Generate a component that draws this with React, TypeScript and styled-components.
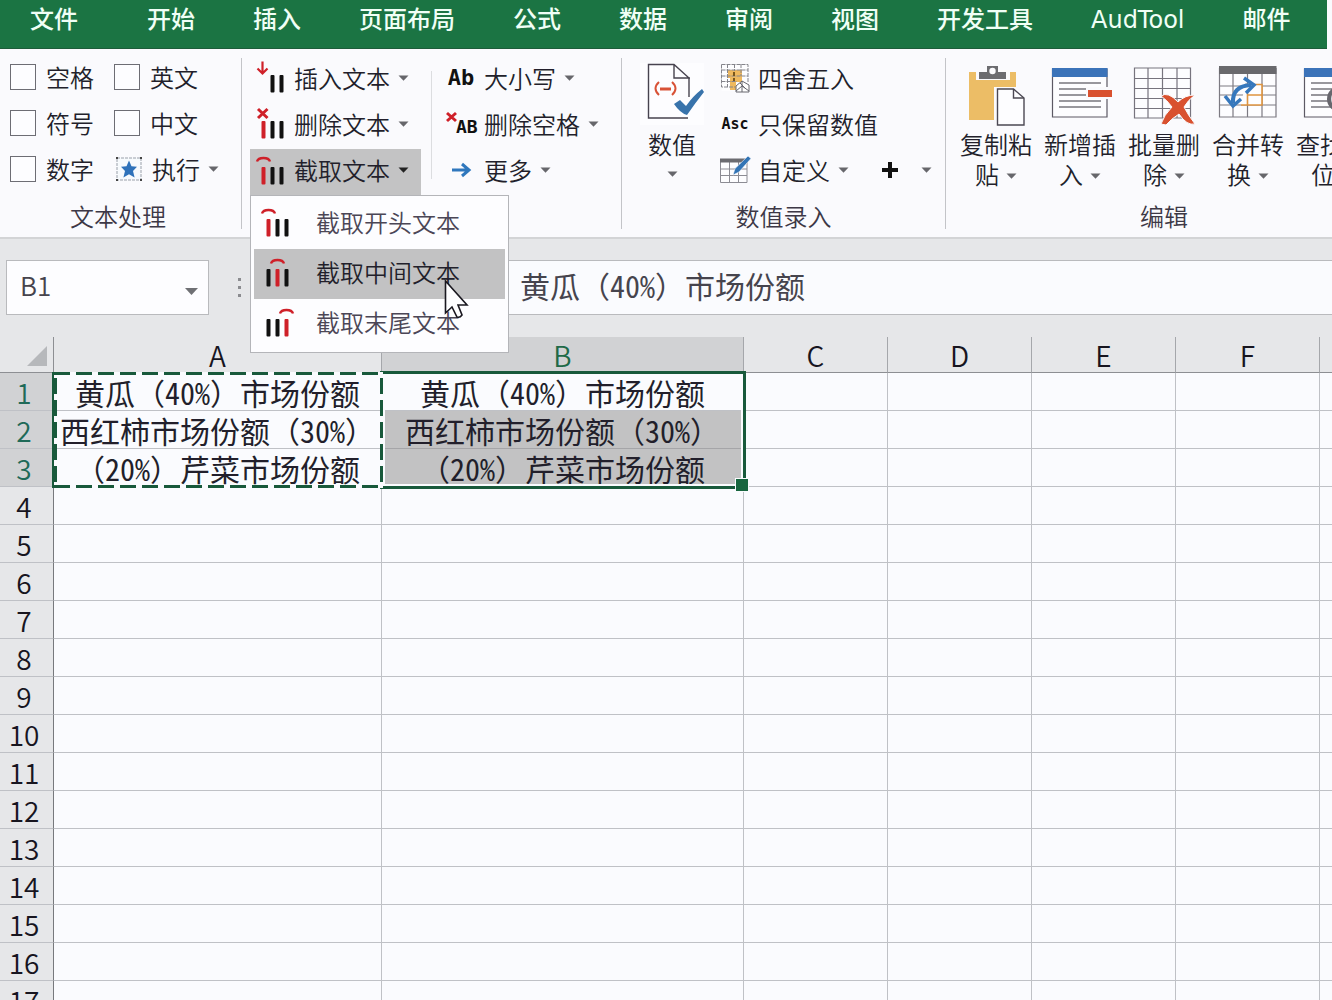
import React from 'react';
import styled, { createGlobalStyle } from 'styled-components';

const GREEN = '#1b7443';
const LINE = '#bfc1c6';
const FONT = '"Noto Sans CJK SC", "Noto Sans", sans-serif';
const GRID_FONT = '"Noto Sans Mono CJK SC", "Noto Sans CJK SC", sans-serif';

const GlobalStyle = createGlobalStyle`
  * { box-sizing: border-box; }
  body { margin: 0; background: #fafbfe; }
  button, input { font: inherit; color: inherit; }
`;

const Window = styled.div`
  height: 100vh;
  overflow: hidden;
  background: #fafbfe;
  color: #221f2b;
  font-family: ${FONT};
  font-size: 24px;
  font-weight: 350;
  line-height: 30px;
`;

/* ---------- tabs ---------- */
const TabBar = styled.nav`
  display: flex;
  height: 49px;
  margin-right: 5px;
  padding: 0 1px 8px;
  overflow: hidden;
  background: ${GREEN};
  border-bottom: 1px solid #1d5c3a;
`;

const Tab = styled.button<{ $first?: boolean }>`
  flex: none;
  padding: 0 ${p => (p.$first ? 40 : 29)}px 0 29px;
  border: 0;
  background: none;
  color: #f0fff6;
  font-family: "DejaVu Sans", ${FONT};
  font-weight: 500;
  white-space: nowrap;
`;

/* ---------- ribbon ---------- */
const Ribbon = styled.div`
  display: flex;
  height: 190px;
  background: #fafafd;
  border-bottom: 2px solid #d3d4d6;
`;

const Group = styled.section<{ $pad?: string }>`
  flex: none;
  display: flex;
  flex-direction: column;
  padding: ${p => p.$pad || '8px 8px 0'};
`;

const GroupBody = styled.div<{ $left?: number }>`
  display: flex;
  height: 138px;
  padding-left: ${p => p.$left || 0}px;
`;

const Caption = styled.div`
  padding-top: 6px;
  color: #3d3846;
  text-align: center;
`;

const Divider = styled.div<{ $inner?: boolean }>`
  flex: none;
  width: 1px;
  margin: ${p => (p.$inner ? '14px 8px 16px 10px' : '9px 0 8px')};
  background: ${p => (p.$inner ? '#dcdde0' : '#c3c4c8')};
`;

const CheckGrid = styled.div`
  display: grid;
  grid-template-columns: 104px 112px;
  grid-auto-rows: 46px;
  height: 141px;
`;

const CheckLabel = styled.label`
  display: flex;
  align-items: center;
  gap: 10px;
`;

const Check = styled.input`
  appearance: none;
  width: 26px;
  height: 26px;
  margin: 0;
  border: 1px solid #6d6d74;
  background: #fdfdff;
`;

const Column = styled.div`
  display: flex;
  flex-direction: column;
  align-items: flex-start;
`;

const Row = styled.div`
  display: flex;
  gap: 8px;
`;

const Tool = styled.button<{ $active?: boolean; $flush?: boolean }>`
  display: flex;
  align-items: center;
  gap: 9px;
  height: 46px;
  padding: ${p => (p.$flush ? '0 0 0 1px' : '0 12px 4px 7px')};
  border: 0;
  background: ${p => (p.$active ? '#c3c3c4' : 'none')};
  white-space: nowrap;
`;

const IconBox = styled.span`
  flex: none;
  display: flex;
  align-items: center;
  justify-content: center;
  width: 28px;
  height: 32px;
  svg { flex: none; overflow: visible; }
`;

const Glyphs = styled.span<{ $size: number }>`
  font-family: "DejaVu Sans Mono", monospace;
  font-size: ${p => p.$size}px;
  font-weight: 700;
  color: #111;
`;

const BigTool = styled.button`
  flex: none;
  align-self: flex-start;
  width: 84px;
  padding: 6px 5px 0;
  border: 0;
  background: none;
  text-align: center;
  svg { overflow: visible; }
`;

const BigIcon = styled.span`
  display: flex;
  justify-content: center;
  height: 66px;
`;

const CaretSvg = styled.svg<{ $block?: boolean; $inText?: boolean }>`
  flex: none;
  display: ${p => (p.$block ? 'block' : 'inline-block')};
  margin: ${p => (p.$block ? '12px auto 0' : p.$inText ? '0 0 5px 7px' : '0 0 0 -1px')};
`;

const MenuAnchor = styled.div`
  position: relative;
`;

const Menu = styled.div`
  position: absolute;
  z-index: 5;
  top: 100%;
  left: 0;
  width: 259px;
  padding: 3px;
  border: 1px solid #b4b5b9;
  background: #fdfdff;
`;

const MenuItem = styled.button<{ $hover?: boolean }>`
  display: flex;
  align-items: center;
  gap: 26px;
  width: 100%;
  height: 50px;
  padding: 0 8px 4px;
  border: 0;
  background: ${p => (p.$hover ? '#c2c2c3' : 'none')};
  color: ${p => (p.$hover ? '#221f2b' : '#4b4656')};
`;

const Pointer = styled.svg`
  position: absolute;
  left: 193px;
  top: 83px;
`;

/* ---------- formula bar ---------- */
const FormulaBar = styled.div`
  display: flex;
  align-items: center;
  height: 98px;
  padding: 0 0 2px 6px;
  background: #e6e7e9;
  color: #46444d;
`;

const NameBox = styled.div`
  display: flex;
  align-items: center;
  flex: none;
  width: 203px;
  height: 55px;
  border: 1px solid #b9babd;
  background: #fdfdff;
`;

const NameInput = styled.input`
  flex: 1;
  min-width: 0;
  padding: 0 0 4px 13px;
  border: 0;
  background: none;
  font-size: 26px;
`;

const NameArrow = styled.button`
  padding: 0 10px;
  border: 0;
  background: none;
  line-height: 12px;
`;

const Dots = styled.div`
  display: grid;
  gap: 5px;
  width: 291px;
  padding-left: 29px;
  span { width: 3px; height: 3px; background: #8b8c90; }
`;

const FormulaInput = styled.input`
  flex: 1;
  min-width: 0;
  height: 55px;
  padding: 0 0 4px 19px;
  border: 1px solid #b9babd;
  border-right: 0;
  background: #fafbfe;
  font-family: ${GRID_FONT};
  font-size: 30px;
`;

/* ---------- sheet ---------- */
const Sheet = styled.table`
  width: 1464px;
  table-layout: fixed;
  border-collapse: separate;
  border-spacing: 0;
  font-size: 30px;
`;

const Corner = styled.th`
  height: 36px;
  padding: 0 6px 0 0;
  background: #e6e7e9;
  border-right: 1px solid #8d8f93;
  border-bottom: 1px solid #8d8f93;
  line-height: 20px;
  text-align: right;
`;

const ColHead = styled.th<{ $on?: boolean }>`
  height: 36px;
  padding: 0;
  background: ${p => (p.$on ? '#d1d2d4' : '#e6e7e9')};
  border-right: 1px solid #a5a7ab;
  border-bottom: 1px solid #8d8f93;
  color: ${p => (p.$on ? '#1f6a48' : '#17151f')};
  font-size: 28px;
  font-weight: 350;
`;

const RowHead = styled.th<{ $on?: boolean }>`
  height: 38px;
  padding: 0 5px 0 0;
  background: ${p => (p.$on ? '#d1d2d4' : '#e6e7e9')};
  border-right: 1px solid #77797d;
  border-bottom: 1px solid ${LINE};
  color: ${p => (p.$on ? '#1f6a58' : '#17151f')};
  font-size: 28px;
  font-weight: 350;
`;

const Cell = styled.td<{ $fill?: boolean }>`
  position: relative;
  height: 38px;
  padding: 0;
  background: ${p => (p.$fill ? '#c2c2c3' : '#fafbfe')};
  border-right: 1px solid ${LINE};
  border-bottom: 1px solid ${p => (p.$fill ? '#a5a5a8' : LINE)};
  font-family: ${GRID_FONT};
  text-align: center;
  white-space: nowrap;
`;

const Selection = styled.div`
  position: absolute;
  z-index: 2;
  top: -2px;
  left: -2px;
  width: calc(100% + 5px);
  height: 118px;
  border: 3px solid #18593b;
  box-shadow: inset 0 0 0 2px #fafbfe;
  &::after {
    content: '';
    position: absolute;
    right: -6px;
    bottom: -6px;
    width: 12px;
    height: 12px;
    background: #18663f;
    border: 1px solid #fafbfe;
  }
`;

const Ants = styled.div`
  position: absolute;
  z-index: 3;
  top: -1px;
  left: -2px;
  width: calc(100% + 4px);
  height: 116px;
  border-left: 2px solid #18593b;
  background:
    repeating-linear-gradient(90deg, #18593b 0 16px, #fafbfe 16px 22px) top / 100% 3px no-repeat,
    repeating-linear-gradient(90deg, #18593b 0 16px, #fafbfe 16px 22px) bottom / 100% 3px no-repeat,
    repeating-linear-gradient(180deg, #fafbfe 0 6px, #18593b 6px 22px) left / 3px 100% no-repeat,
    repeating-linear-gradient(180deg, #fafbfe 0 6px, #18593b 6px 22px) right / 3px 100% no-repeat;
`;

/* ---------- icons ---------- */
const RED = '#cf2029';

function Caret({ block, inText, dark }: { block?: boolean; inText?: boolean; dark?: boolean }) {
  return (
    <CaretSvg $block={block} $inText={inText} width="11" height="6" viewBox="0 0 11 6" aria-hidden="true">
      <path d="M0.5 0.5H10.5L5.5 5.8Z" fill={dark ? '#222' : '#66666b'} />
    </CaretSvg>
  );
}

type BarsProps = { red?: number; mark: 'arrow' | 'x' | 'arc'; shift?: number };

function Bars({ red, mark, shift = 0 }: BarsProps) {
  const arc = shift + (red || 0) * 9;
  return (
    <svg width="28" height="30" viewBox="0 0 28 30" aria-hidden="true">
      {[0, 1, 2].map(i =>
        mark === 'arrow' && i === 0 ? null : (
          <rect key={i} x={4.5 + shift + i * 9} y="12" width="4" height="17.5" rx="1" fill={i === red ? RED : '#111'} />
        ),
      )}
      {mark === 'arrow' && <path d="M5.5 -1.5V10M0.5 5.5L5.5 10.5L10.5 5.5" fill="none" stroke={RED} strokeWidth="2.2" />}
      {mark === 'x' && <path d="M1 0L10.5 9M10.5 0L1 9" stroke={RED} strokeWidth="3" />}
      {mark === 'arc' && (
        <path d={`M${arc} 6.5Q${arc + 1} 3 ${arc + 6.5} 3T${arc + 13} 6.5`} fill="none" stroke={RED} strokeWidth="2.4" />
      )}
    </svg>
  );
}

const StarIcon = () => (
  <svg width="26" height="24" viewBox="0 0 26 24" aria-hidden="true">
    <rect x="1" y="1" width="24" height="22" fill="#f7fafd" stroke="#9aa0aa" strokeDasharray="3 1" />
    <path d="M0 0h2v2H0zM24 0h2v2h-2zM0 22h2v2H0zM24 22h2v2h-2z" fill="#444" />
    <path d="M13 3.5L15.5 9.3L21 9.8L17 14L18.6 20.5L13 17.2L7.4 20.5L9 14L5 9.8L10.5 9.3Z" fill="#2f72ba" />
  </svg>
);

const StripSpaceIcon = () => (
  <svg width="31" height="24" viewBox="0 0 31 24" aria-hidden="true">
    <path d="M1 1L10 9M10 1L1 9" stroke={RED} strokeWidth="3" />
    <text x="10" y="21" fontFamily="DejaVu Sans Mono, monospace" fontWeight="700" fontSize="18" fill="#111">AB</text>
  </svg>
);

const ArrowIcon = () => (
  <svg width="20" height="16" viewBox="0 0 20 16" aria-hidden="true">
    <path d="M1 8H18M11 2L18 8L11 14" fill="none" stroke="#2f77bd" strokeWidth="3" />
  </svg>
);

const RoundIcon = () => (
  <svg width="28" height="28" viewBox="0 0 28 28" aria-hidden="true">
    <path d="M0.5 0.5H27V27H0.5Z" fill="#fdfdff" />
    <path d="M7 6H21V18H15V26H9V14H7Z" fill="#f0b95e" />
    <path d="M0.5 0.5H27V19M0.5 0.5V23H14M0.5 6H27M0.5 12H27M0.5 17.5H16M6.5 0V23M13.5 0V7M20 0V12" fill="none" stroke="#84848b" strokeDasharray="4 1" />
    <path d="M13 8V17" stroke="#7a571c" strokeWidth="2" strokeDasharray="4 2" />
    <path d="M15 22L21 17L28 21V28H15Z" fill="#fff" stroke="#66666e" />
    <path d="M15 27L21 22L28 27M19 19L25 25M21 17V28" fill="none" stroke="#66666e" />
  </svg>
);

const CustomIcon = () => (
  <svg width="31" height="28" viewBox="0 0 31 28" aria-hidden="true">
    <path d="M0.5 4V26.5H27V4M0.5 13H27M0.5 19.5H27M9.5 6V26M18.5 6V26" fill="#fdfdff" stroke="#8c8c94" />
    <path d="M0 2.5H28V6.5H0Z" fill="#6b6b70" />
    <path d="M28 0L31 2.5L19 16L13 19L15 12.5Z" fill="#3274b5" stroke="#fafafd" strokeWidth="0.6" />
  </svg>
);

const PlusIcon = () => (
  <svg width="16" height="16" viewBox="0 0 16 16" aria-hidden="true">
    <path d="M8 0V16M0 8H16" stroke="#111" strokeWidth="4" />
  </svg>
);

const NumberIcon = () => (
  <svg width="64" height="62" viewBox="0 0 64 62" aria-hidden="true">
    <path d="M0 0H64V62H0Z" fill="#fdfdff" />
    <path d="M49 34V15L34 1.5H8.500V55H48M34 1.500V15H50" fill="none" stroke="#47434f" strokeWidth="1.400" />
    <path d="M19 19Q12 25.500 19 32M32 19Q39 25.500 32 32" fill="none" stroke="#d85237" strokeWidth="2" />
    <path d="M20 26H31" stroke="#d85237" strokeWidth="3" />
    <path d="M34 41L40 37L46 43Q53 33 62 26L64 29Q56 39 47 52Q40 50 34 41Z" fill="#3873ab" />
  </svg>
);

const PasteIcon = () => (
  <svg width="58" height="60" viewBox="0 0 58 60" aria-hidden="true">
    <path d="M2 9H49V24H27V57H2Z" fill="#ecbd66" />
    <path d="M9 5H43V17H9Z" fill="#fafafd" />
    <path d="M12 9H20V3H31V9H39V16H12Z" fill="#6c6c70" />
    <circle cx="25.500" cy="8" r="3.200" fill="#fafafd" />
    <path d="M30.500 26H46.500L57 35V62H30.500Z" fill="#fdfdff" stroke="#4b4853" strokeWidth="1.400" />
    <path d="M46.500 26V35H57" fill="none" stroke="#4b4853" strokeWidth="1.400" />
  </svg>
);

const FormBase = ({ children }: { children?: React.ReactNode }) => (
  <svg width="56" height="60" viewBox="0 0 56 60" aria-hidden="true">
    <path d="M0.500 6H55V54H0.500Z" fill="#fdfdff" stroke="#5c5964" strokeWidth="1.200" />
    <path d="M0 5H55.500V14H0Z" fill="#3b73b9" />
    <path d="M7 20H49M7 26H49M7 32H40M7 38H49M7 44H49" stroke="#77757d" strokeWidth="1.400" />
    {children}
  </svg>
);

const InsertIcon = () => (
  <FormBase>
    <path d="M34 24H62V36H34Z" fill="#fafafd" />
    <path d="M36 27H60V34H36Z" fill="#d9512f" />
  </FormBase>
);

const FindIcon = () => (
  <FormBase>
    <circle cx="36" cy="36" r="11" fill="#d9dce2" stroke="#67666d" strokeWidth="4" />
    <path d="M44 44L54 56" stroke="#67666d" strokeWidth="5" />
  </FormBase>
);

const BatchDeleteIcon = () => (
  <svg width="60" height="60" viewBox="0 0 60 60" aria-hidden="true">
    <path d="M0.500 5H56.500V55H0.500ZM0.500 15.500H56M0.500 25.500H56M0.500 35.500H56M0.500 45.500H56M14 5V55M28.500 5V55M43 5V55" fill="#fdfdff" stroke="#77747e" strokeWidth="1.200" />
    <path d="M27 33Q34 28 44 39Q51 32 61 32Q54 37 50 44Q54 52 61 61Q53 63 45 51Q37 56 32 62L27 61Q30 52 38 44Q33 37 27 33Z" fill="#d9512f" stroke="#fafafd" />
  </svg>
);

const MergeIcon = () => (
  <svg width="58" height="60" viewBox="0 0 58 60" aria-hidden="true">
    <path d="M0.500 5V54H57V5M0.500 23H57M0.500 32H57M0.500 42H57M14 11V54M28.500 11V54M43 11V54" fill="#fdfdff" stroke="#7c7a82" strokeWidth="1.200" />
    <path d="M0 3H57.500V11H0Z" fill="#69696d" />
    <path d="M26 21.500H43V42H22M28.500 32H43M28.500 28V42" fill="#fdfdff" stroke="#de9440" strokeWidth="1.600" />
    <path d="M14 40Q13 23 32 22" fill="none" stroke="#3678bd" strokeWidth="4" />
    <path d="M25 15L35 22L27 30M6 33L14 43L22 36" fill="none" stroke="#3678bd" strokeWidth="3.500" />
  </svg>
);

/* ---------- data ---------- */
const TABS = ['文件', '开始', '插入', '页面布局', '公式', '数据', '审阅', '视图', '开发工具', 'AudTool', '邮件'];
const CHECKS = ['空格', '英文', '符号', '中文', '数字'];
const EDIT_TOOLS = [
  { text: '复制粘贴', icon: <PasteIcon /> },
  { text: '新增插入', icon: <InsertIcon /> },
  { text: '批量删除', icon: <BatchDeleteIcon /> },
  { text: '合并转换', icon: <MergeIcon /> },
  { text: '查找定位', icon: <FindIcon /> },
];
const CUTS = ['截取开头文本', '截取中间文本', '截取末尾文本'];
const COLUMNS = ['A', 'B', 'C', 'D', 'E', 'F', 'G'];
const WIDTHS = [54, 328, 362, 144, 144, 144, 144, 144];
const VALUES = ['黄瓜（40%）市场份额', '西红柿市场份额（30%）', '（20%）芹菜市场份额'];
const ROWS = Array.from({ length: 17 }, (_, i) => i + 1);

export default function App() {
  return (
    <Window>
      <GlobalStyle />
      <TabBar>
        {TABS.map((t, i) => <Tab key={t} $first={i === 0}>{t}</Tab>)}
      </TabBar>

      <Ribbon>
        <Group $pad="5px 15px 0 10px">
          <CheckGrid>
            {CHECKS.map(c => (
              <CheckLabel key={c}><Check type="checkbox" />{c}</CheckLabel>
            ))}
            <Tool $flush><IconBox><StarIcon /></IconBox>执行<Caret /></Tool>
          </CheckGrid>
          <Caption>文本处理</Caption>
        </Group>
        <Divider />

        <Group $pad="8px 10px 0 8px">
          <GroupBody>
            <Column>
              <Tool><IconBox><Bars mark="arrow" /></IconBox>插入文本<Caret /></Tool>
              <Tool><IconBox><Bars mark="x" red={0} /></IconBox>删除文本<Caret /></Tool>
              <MenuAnchor>
                <Tool $active aria-haspopup="menu" aria-expanded="true">
                  <IconBox><Bars mark="arc" red={0} /></IconBox>截取文本<Caret dark />
                </Tool>
                <Menu role="menu">
                  {CUTS.map((c, i) => (
                    <MenuItem key={c} role="menuitem" $hover={i === 1}>
                      <IconBox><Bars mark="arc" red={i} /></IconBox>{c}
                    </MenuItem>
                  ))}
                  <Pointer width="26" height="42" viewBox="0 0 26 42" aria-hidden="true">
                    <path d="M1.500 2V34L8 28L13 38Q16 39 18 36L14 26H23Z" fill="#fdfdff" stroke="#1a1820" strokeWidth="1.600" />
                  </Pointer>
                </Menu>
              </MenuAnchor>
            </Column>
            <Divider $inner />
            <Column>
              <Tool><IconBox><Glyphs $size={22}>Ab</Glyphs></IconBox>大小写<Caret /></Tool>
              <Tool><IconBox><StripSpaceIcon /></IconBox>删除空格<Caret /></Tool>
              <Tool><IconBox><ArrowIcon /></IconBox>更多<Caret /></Tool>
            </Column>
          </GroupBody>
        </Group>
        <Divider />

        <Group $pad="8px 1px 0">
          <GroupBody $left={7}>
            <BigTool><BigIcon><NumberIcon /></BigIcon>数值<Caret block /></BigTool>
            <Column>
              <Tool><IconBox><RoundIcon /></IconBox>四舍五入</Tool>
              <Tool><IconBox><Glyphs $size={15}>Asc</Glyphs></IconBox>只保留数值</Tool>
              <Row>
                <Tool><IconBox><CustomIcon /></IconBox>自定义<Caret /></Tool>
                <Tool aria-label="添加"><IconBox><PlusIcon /></IconBox><span /><Caret /></Tool>
              </Row>
            </Column>
          </GroupBody>
          <Caption>数值录入</Caption>
        </Group>
        <Divider />

        <Group>
          <GroupBody>
            {EDIT_TOOLS.map(t => (
              <BigTool key={t.text}><BigIcon>{t.icon}</BigIcon>{t.text}<Caret inText /></BigTool>
            ))}
          </GroupBody>
          <Caption>编辑</Caption>
        </Group>
      </Ribbon>

      <FormulaBar>
        <NameBox>
          <NameInput aria-label="名称框" defaultValue="B1" />
          <NameArrow aria-label="展开名称">
            <svg width="13" height="7" viewBox="0 0 13 7" aria-hidden="true"><path d="M0 0H13L6.500 7Z" fill="#6f7074" /></svg>
          </NameArrow>
        </NameBox>
        <Dots><span /><span /><span /></Dots>
        <FormulaInput aria-label="编辑栏" defaultValue={VALUES[0]} />
      </FormulaBar>

      <Sheet>
        <colgroup>{WIDTHS.map((w, i) => <col key={i} width={w} />)}</colgroup>
        <thead>
          <tr>
            <Corner>
              <svg width="20" height="20" viewBox="0 0 20 20" aria-hidden="true"><path d="M20 0V20H0Z" fill="#b6b8bb" /></svg>
            </Corner>
            {COLUMNS.map(c => <ColHead key={c} $on={c === 'B'}>{c}</ColHead>)}
          </tr>
        </thead>
        <tbody>
          {ROWS.map(r => (
            <tr key={r}>
              <RowHead $on={r <= 3}>{r}</RowHead>
              {COLUMNS.map((c, i) => (
                <Cell key={c} $fill={c === 'B' && (r === 2 || r === 3)}>
                  {i < 2 && VALUES[r - 1]}
                  {r === 1 && c === 'A' && <Ants />}
                  {r === 1 && c === 'B' && <Selection />}
                </Cell>
              ))}
            </tr>
          ))}
        </tbody>
      </Sheet>
    </Window>
  );
}
